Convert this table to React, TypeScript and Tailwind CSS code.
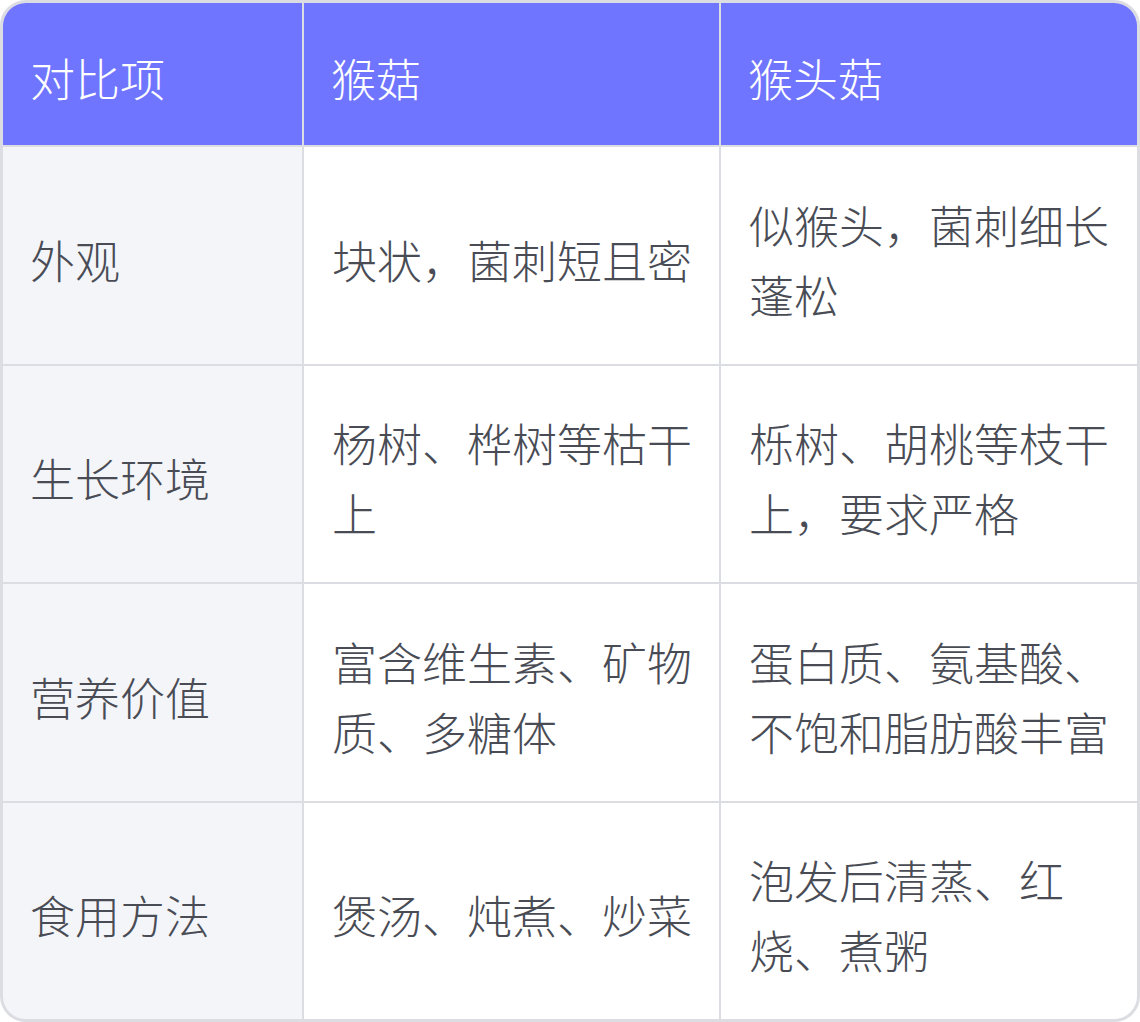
import React from "react";

const rows: [string, string, string][] = [
  ["外观", "块状，菌刺短且密", "似猴头，菌刺细长蓬松"],
  ["生长环境", "杨树、桦树等枯干上", "栎树、胡桃等枝干上，要求严格"],
  ["营养价值", "富含维生素、矿物质、多糖体", "蛋白质、氨基酸、不饱和脂肪酸丰富"],
  ["食用方法", "煲汤、炖煮、炒菜", "泡发后清蒸、红烧、煮粥"],
];

const font = { fontFamily: '"Noto Sans CJK SC", "Noto Sans", sans-serif' };

export default function App() {
  return (
    <div className="w-[1140px] h-[1022px] bg-white font-light" style={font}>
      <div className="w-[1140px] h-[1022px] border-[3px] border-[#dcdde2] rounded-[26px] overflow-hidden">
        <div className="grid grid-cols-[299px_415px_416px] grid-rows-[142px_217px_216px_217px_216px] gap-[2px] bg-[#dcdde2] h-full">
          {["对比项", "猴菇", "猴头菇"].map((h) => (
            <div key={h} className="bg-[#6f75ff] text-white text-[45px] leading-[70px] px-[27px] pt-[8px] flex items-center">
              <span>{h}</span>
            </div>
          ))}
          {rows.map((r) => (
            <React.Fragment key={r[0]}>
              <div className="bg-[#f4f5f9] text-[#494c55] text-[45px] leading-[70px] pl-[27px] pr-[27px] pt-[8px] flex items-center">
                <span>{r[0]}</span>
              </div>
              <div className="bg-white text-[#494c55] text-[45px] leading-[70px] pl-[28px] pr-[26px] pt-[8px] flex items-center">
                <span>{r[1]}</span>
              </div>
              <div className="bg-white text-[#494c55] text-[45px] leading-[70px] pl-[28px] pr-[26px] pt-[8px] flex items-center">
                <span>{r[2]}</span>
              </div>
            </React.Fragment>
          ))}
        </div>
      </div>
    </div>
  );
}
